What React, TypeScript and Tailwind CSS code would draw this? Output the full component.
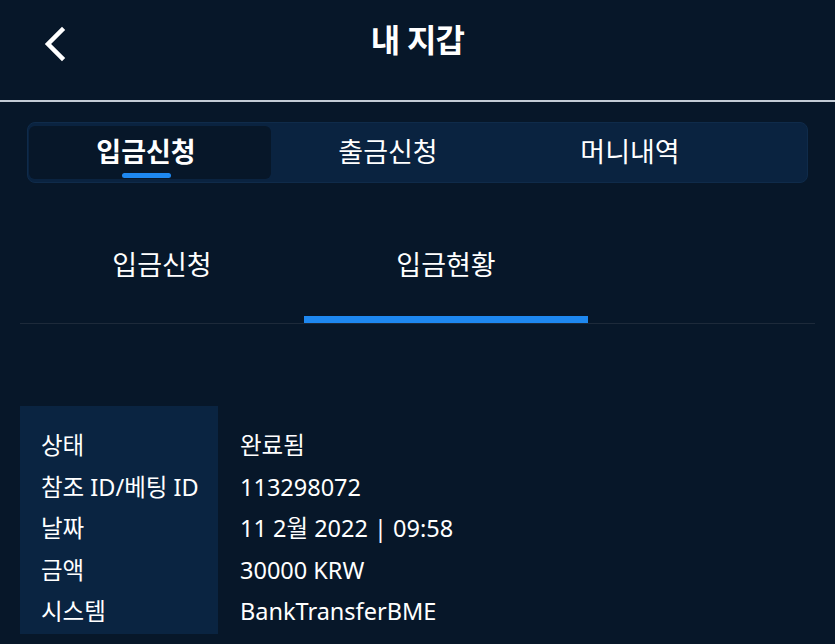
const FONT = { fontFamily: '"Noto Sans", "Noto Sans CJK KR", sans-serif' };

const ROWS = [
  { label: '상태', value: '완료됨' },
  { label: '참조 ID/베팅 ID', value: '113298072' },
  { label: '날짜', value: '11 2월 2022 | 09:58' },
  { label: '금액', value: '30000 KRW' },
  { label: '시스템', value: 'BankTransferBME' },
];

export default function App() {
  const tabs = ['입금신청', '출금신청', '머니내역'];
  const subTabs = ['입금신청', '입금현황'];

  return (
    <div className="min-h-screen w-full bg-[#071729] text-white" style={FONT}>
      {/* header */}
      <header className="h-[102px] border-b-2 border-[#c3ccd6]">
        <div className="relative flex h-[80px] items-center justify-center">
          <button className="absolute left-[37px] top-[22px] p-1">
            <svg width="26" height="36" viewBox="0 0 26 36" fill="none">
              <path d="M21 4 L7 18 L21 32" stroke="white" strokeWidth="4.5" strokeLinecap="square" />
            </svg>
          </button>
          <h1 className="text-[32px] font-bold tracking-tight">내 지갑</h1>
        </div>
      </header>

      {/* main tabs */}
      <div className="mx-[27px] mt-[20px] flex rounded-lg border border-[#0f2b4a] bg-[#0a2340] px-[1px] py-[3px]">
        {tabs.map((t, i) => (
          <div
            key={t}
            className={`relative flex h-[53px] w-[242px] items-center justify-center rounded-md pr-[8px] text-[27px] ${
              i === 0 ? 'bg-[#071729] font-bold' : 'font-normal'
            }`}
          >
            {t}
            {i === 0 && <span className="absolute bottom-[1px] h-[5px] w-[49px] rounded-full bg-[#1e88f0]" />}
          </div>
        ))}
      </div>

      {/* sub tabs */}
      <div className="mx-[20px] mt-[32px] flex border-b border-[#1d2a3a]">
        {subTabs.map((t, i) => (
          <div
            key={t}
            className={`flex h-[108px] w-[284px] items-center justify-center border-b-[7px] text-[27px] ${
              i === 1 ? 'border-[#1e88f0]' : 'border-transparent'
            }`}
          >
            {t}
          </div>
        ))}
      </div>

      {/* detail table */}
      <div className="mx-[20px] mt-[82px] flex text-[23.5px]">
        <div className="w-[198px] bg-[#0a2441] pb-[1px] pl-[21px] pt-[19px]">
          {ROWS.map(r => (
            <div key={r.label} className="flex h-[41.5px] items-center whitespace-nowrap">
              {r.label}
            </div>
          ))}
        </div>
        <div className="pl-[22px] pt-[19px]">
          {ROWS.map(r => (
            <div key={r.label} className="flex h-[41.5px] items-center whitespace-nowrap">
              {r.value}
            </div>
          ))}
        </div>
      </div>
    </div>
  );
}
